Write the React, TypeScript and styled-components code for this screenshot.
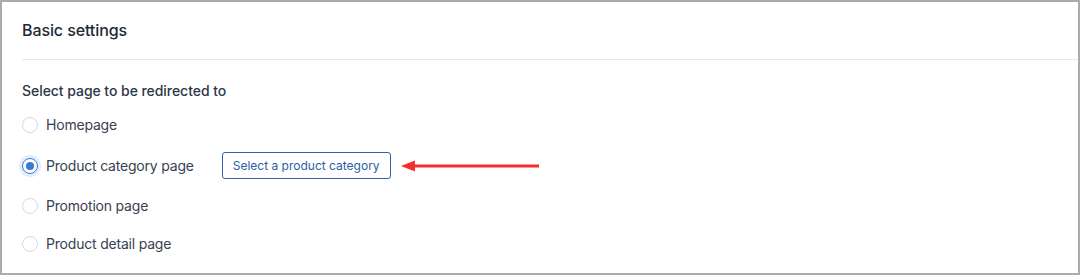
import React, { useState } from "react";
import styled, { createGlobalStyle } from "styled-components";

const GlobalStyle = createGlobalStyle`
  html, body {
    margin: 0;
    padding: 0;
    background: #ffffff;
  }
  body {
    font-family: Inter, "Liberation Sans", Arial, sans-serif;
    -webkit-font-smoothing: antialiased;
  }
`;

const options = [
  { id: "home", label: "Homepage" },
  { id: "category", label: "Product category page" },
  { id: "promotion", label: "Promotion page" },
  { id: "detail", label: "Product detail page" },
];

const RedArrow = () => (
  <svg width="140" height="12" viewBox="0 0 140 12" aria-hidden="true">
    <path d="M12 6 H138" stroke="#f42f2c" strokeWidth="3" />
    <path d="M0 6 L14 0.5 L14 11.5 Z" fill="#f42f2c" />
  </svg>
);

const App: React.FC = () => {
  const [selected, setSelected] = useState("category");

  return (
    <>
      <GlobalStyle />
      <Panel>
        <Header>
          <Title>Basic settings</Title>
        </Header>
        <Body>
          <GroupLabel>Select page to be redirected to</GroupLabel>
          <RadioList>
            {options.map((o) => (
              <Row key={o.id}>
                <Option onClick={() => setSelected(o.id)}>
                  <Radio checked={selected === o.id} />
                  <OptionText>{o.label}</OptionText>
                </Option>
                {o.id === "category" && (
                  <>
                    <PickButton type="button">Select a product category</PickButton>
                    <ArrowWrap>
                      <RedArrow />
                    </ArrowWrap>
                  </>
                )}
              </Row>
            ))}
          </RadioList>
        </Body>
      </Panel>
    </>
  );
};

export default App;

const Panel = styled.div`
  width: 1080px;
  height: 275px;
  box-sizing: border-box;
  border: 2px solid #ababab;
  background: #fff;
  display: flex;
  flex-direction: column;
`;

const Header = styled.div`
  margin-left: 20px;
  height: 58px;
  box-sizing: border-box;
  border-bottom: 1px solid #e6e8eb;
  display: flex;
  align-items: center;
  padding-bottom: 2px;
`;

const Title = styled.h2`
  margin: 0;
  font-size: 16px;
  font-weight: 500;
  color: #1f2937;
  letter-spacing: -0.1px;
`;

const Body = styled.div`
  padding: 21px 0 0 20px;
  display: flex;
  flex-direction: column;
`;

const GroupLabel = styled.div`
  font-size: 14px;
  line-height: 20px;
  font-weight: 500;
  color: #2d3748;
  letter-spacing: -0.05px;
  margin-bottom: 13px;
`;

const RadioList = styled.div`
  display: flex;
  flex-direction: column;
  gap: 16px;
`;

const Row = styled.div`
  display: flex;
  align-items: center;
  min-height: 22px;
`;

const Option = styled.label`
  display: flex;
  align-items: center;
  gap: 8px;
  cursor: pointer;
`;

const Radio = styled.span<{ checked: boolean }>`
  width: 16px;
  height: 16px;
  box-sizing: border-box;
  border-radius: 50%;
  border: ${(p) => (p.checked ? "1.5px solid #3a78dc" : "1px solid #d3dae3")};
  background: #fff;
  display: flex;
  align-items: center;
  justify-content: center;
  box-shadow: ${(p) => (p.checked ? "0 0 0 3px #e3eefc" : "none")};

  &::after {
    content: "";
    width: 8px;
    height: 8px;
    border-radius: 50%;
    background: #3a78dc;
    display: ${(p) => (p.checked ? "block" : "none")};
  }
`;

const OptionText = styled.span`
  font-size: 14px;
  line-height: 22px;
  color: #374151;
  letter-spacing: -0.2px;
`;

const PickButton = styled.button`
  margin-left: 28px;
  height: 27px;
  padding: 0 10px;
  border: 1px solid #2f62ad;
  border-radius: 3px;
  background: #fff;
  color: #2b5ea8;
  font-family: inherit;
  font-size: 12px;
  cursor: pointer;
`;

const ArrowWrap = styled.span`
  display: flex;
  margin-left: 10px;
`;
